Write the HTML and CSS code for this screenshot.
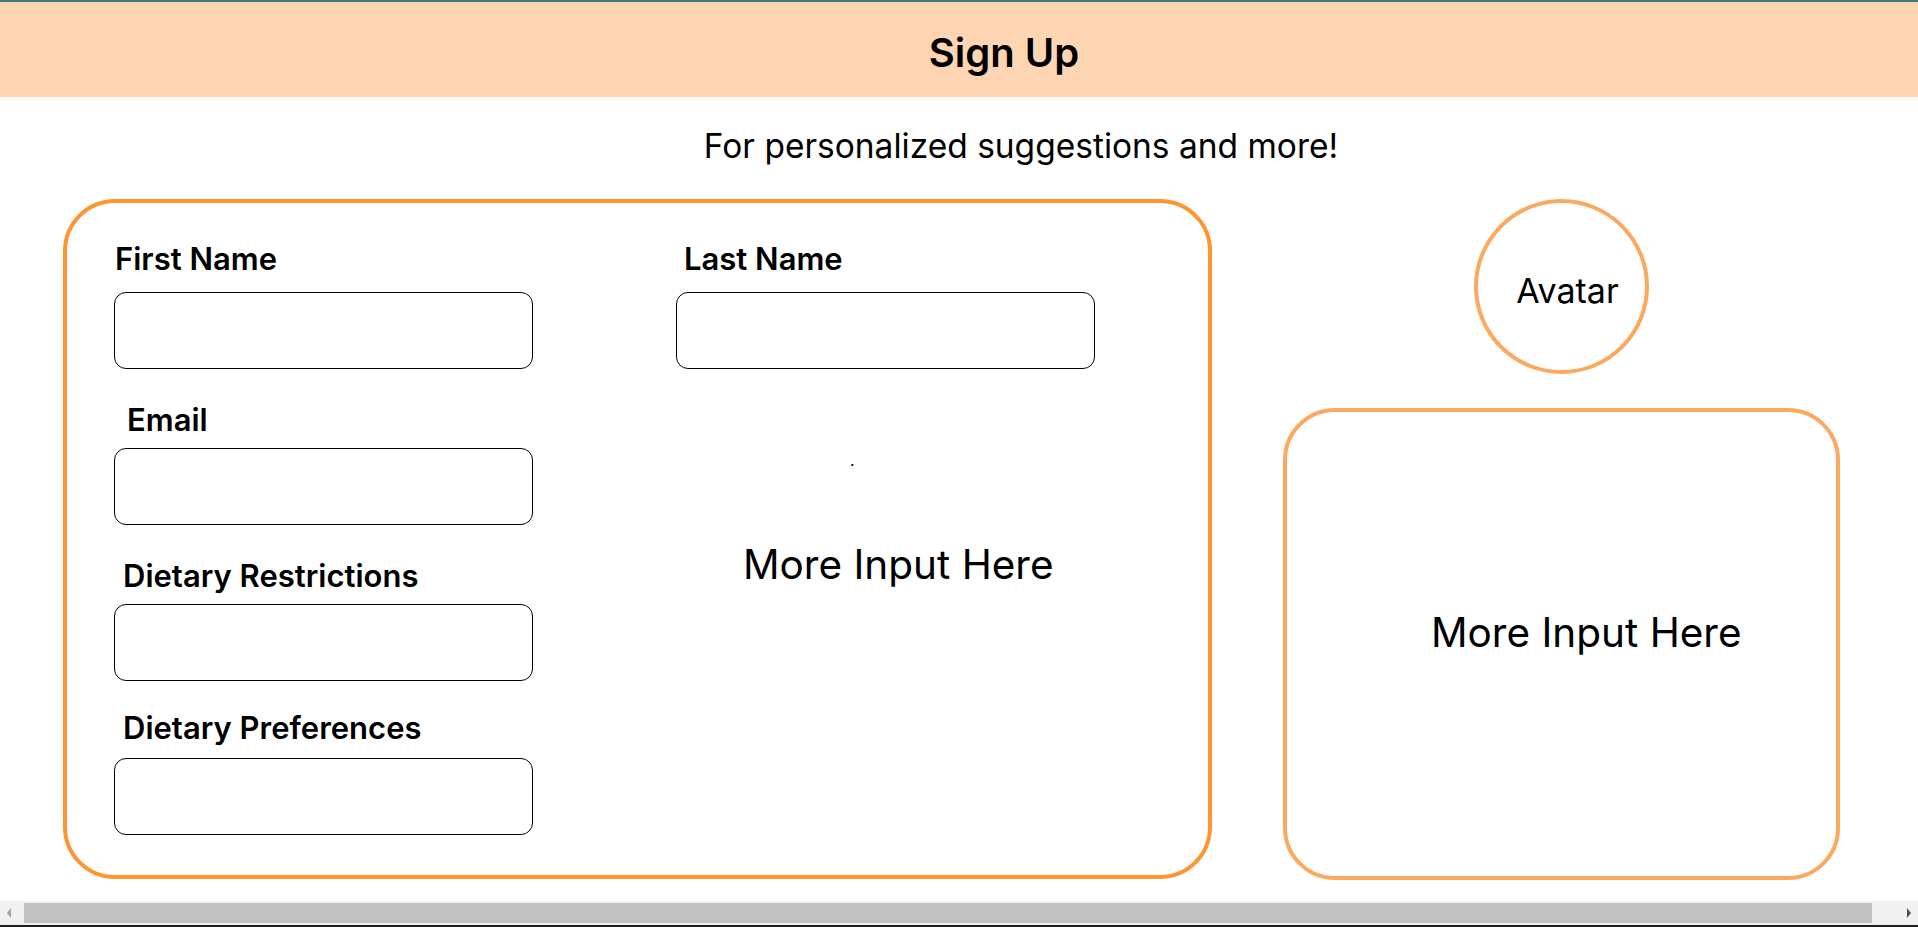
FILE: index.html
```html
<!DOCTYPE html>
<html lang="en">
<head>
<meta charset="utf-8">
<title>Sign Up</title>
<link rel="stylesheet" href="styles.css">
</head>
<body>
<div class="page">
  <header class="topbar"><h1 class="title">Sign Up</h1></header>
  <p class="subtitle">For personalized suggestions and more!</p>
  <main class="main">
    <section class="form-card">
      <div class="col col-left">
        <div class="field f-first">
          <label class="lbl">First Name</label>
          <input class="inp" type="text">
        </div>
        <div class="field f-next">
          <label class="lbl ind-email">Email</label>
          <input class="inp" type="text">
        </div>
        <div class="field f-next">
          <label class="lbl ind-diet">Dietary Restrictions</label>
          <input class="inp" type="text">
        </div>
        <div class="field f-last">
          <label class="lbl ind-pref">Dietary Preferences</label>
          <input class="inp" type="text">
        </div>
      </div>
      <div class="col col-right">
        <div class="field f-first">
          <label class="lbl ind-last">Last Name</label>
          <input class="inp" type="text">
        </div>
        <span class="dot">.</span>
        <p class="more more-left">More Input Here</p>
      </div>
    </section>
    <aside class="side">
      <div class="avatar"><span class="avatar-text">Avatar</span></div>
      <section class="more-card"><p class="more">More Input Here</p></section>
    </aside>
  </main>
  <div class="hscroll">
    <span class="arrow arrow-left"></span>
    <span class="thumb"></span>
    <span class="arrow arrow-right"></span>
  </div>
</div>
</body>
</html>
```

FILE: styles.css
```css
* { box-sizing: border-box; }

html, body {
  margin: 0;
  padding: 0;
  background: #ffffff;
  overflow: hidden;
}

body {
  font-family: Inter, "Noto Sans", "Liberation Sans", sans-serif;
  color: #000;
}

.page {
  width: 1918px;
  height: 927px;
  position: relative;
}

.topbar {
  border-top: 2px solid #3e7f7c;
  background: #fdd5b2;
  padding: 27px 0 20px 90px;
  text-align: center;
}

.title {
  margin: 0;
  font-size: 40px;
  line-height: 48px;
  font-weight: 600;
}

.subtitle {
  margin: 29px 0 0;
  padding-left: 124px;
  text-align: center;
  font-size: 33.5px;
  line-height: 40px;
  font-weight: 400;
}

.main {
  display: flex;
  align-items: flex-start;
  margin-top: 33px;
  padding-left: 63px;
}

.form-card {
  width: 1149px;
  height: 680px;
  border: 4px solid #ff9431;
  border-radius: 52px;
  display: flex;
  padding: 38px 0 0 47px;
}

.col {
  width: 419px;
  display: flex;
  flex-direction: column;
}

.col-right {
  margin-left: 143px;
}

.field {
  display: flex;
  flex-direction: column;
}

.lbl {
  font-size: 31px;
  line-height: 36px;
  font-weight: 600;
  margin-bottom: 10px;
}

.f-first .lbl { margin-bottom: 15px; }
.f-next { margin-top: 33px; }
.f-last { margin-top: 29px; }
.f-last .lbl { margin-bottom: 12px; }

.f-first .lbl { padding-left: 1px; }
.ind-email { padding-left: 13px; }
.ind-diet { padding-left: 9px; }
.ind-pref { padding-left: 9px; }
.f-first .ind-last { padding-left: 8px; }

.inp {
  width: 419px;
  height: 77px;
  border: 1px solid #000;
  border-radius: 12px;
  background: #fff;
  margin: 0;
  padding: 0 12px;
  font: inherit;
  outline: none;
}

.dot {
  display: block;
  font-size: 16px;
  line-height: 16px;
  margin: 83px 0 0 174px;
}

.more {
  margin: 0;
  font-size: 40.5px;
  line-height: 48px;
  font-weight: 400;
}

.more-left {
  margin: 73px 0 0 67px;
}

.side {
  width: 557px;
  margin-left: 71px;
  display: flex;
  flex-direction: column;
  align-items: center;
}

.avatar {
  width: 175px;
  height: 175px;
  border: 4px solid #fca85e;
  border-radius: 50%;
  display: flex;
  align-items: center;
  justify-content: center;
  padding: 8px 0 0 12px;
}

.avatar-text {
  font-size: 34px;
  line-height: 41px;
}

.more-card {
  margin-top: 34px;
  width: 557px;
  height: 472px;
  border: 4px solid #fca85e;
  border-radius: 52px;
  padding: 197px 0 0 144px;
}

.hscroll {
  position: absolute;
  left: 0;
  bottom: 0;
  width: 1918px;
  height: 26px;
  background: #f1f1f1;
  border-bottom: 2px solid #1e1e1e;
  display: flex;
  align-items: center;
}

.thumb {
  position: absolute;
  left: 24px;
  top: 2px;
  width: 1848px;
  height: 20px;
  background: #c1c1c1;
}

.arrow {
  position: absolute;
  top: 7px;
  width: 0;
  height: 0;
  border-top: 5px solid transparent;
  border-bottom: 5px solid transparent;
}

.arrow-left {
  left: 7px;
  border-right: 4px solid #a3a3a3;
}

.arrow-right {
  right: 7px;
  border-left: 4px solid #505050;
}
```
